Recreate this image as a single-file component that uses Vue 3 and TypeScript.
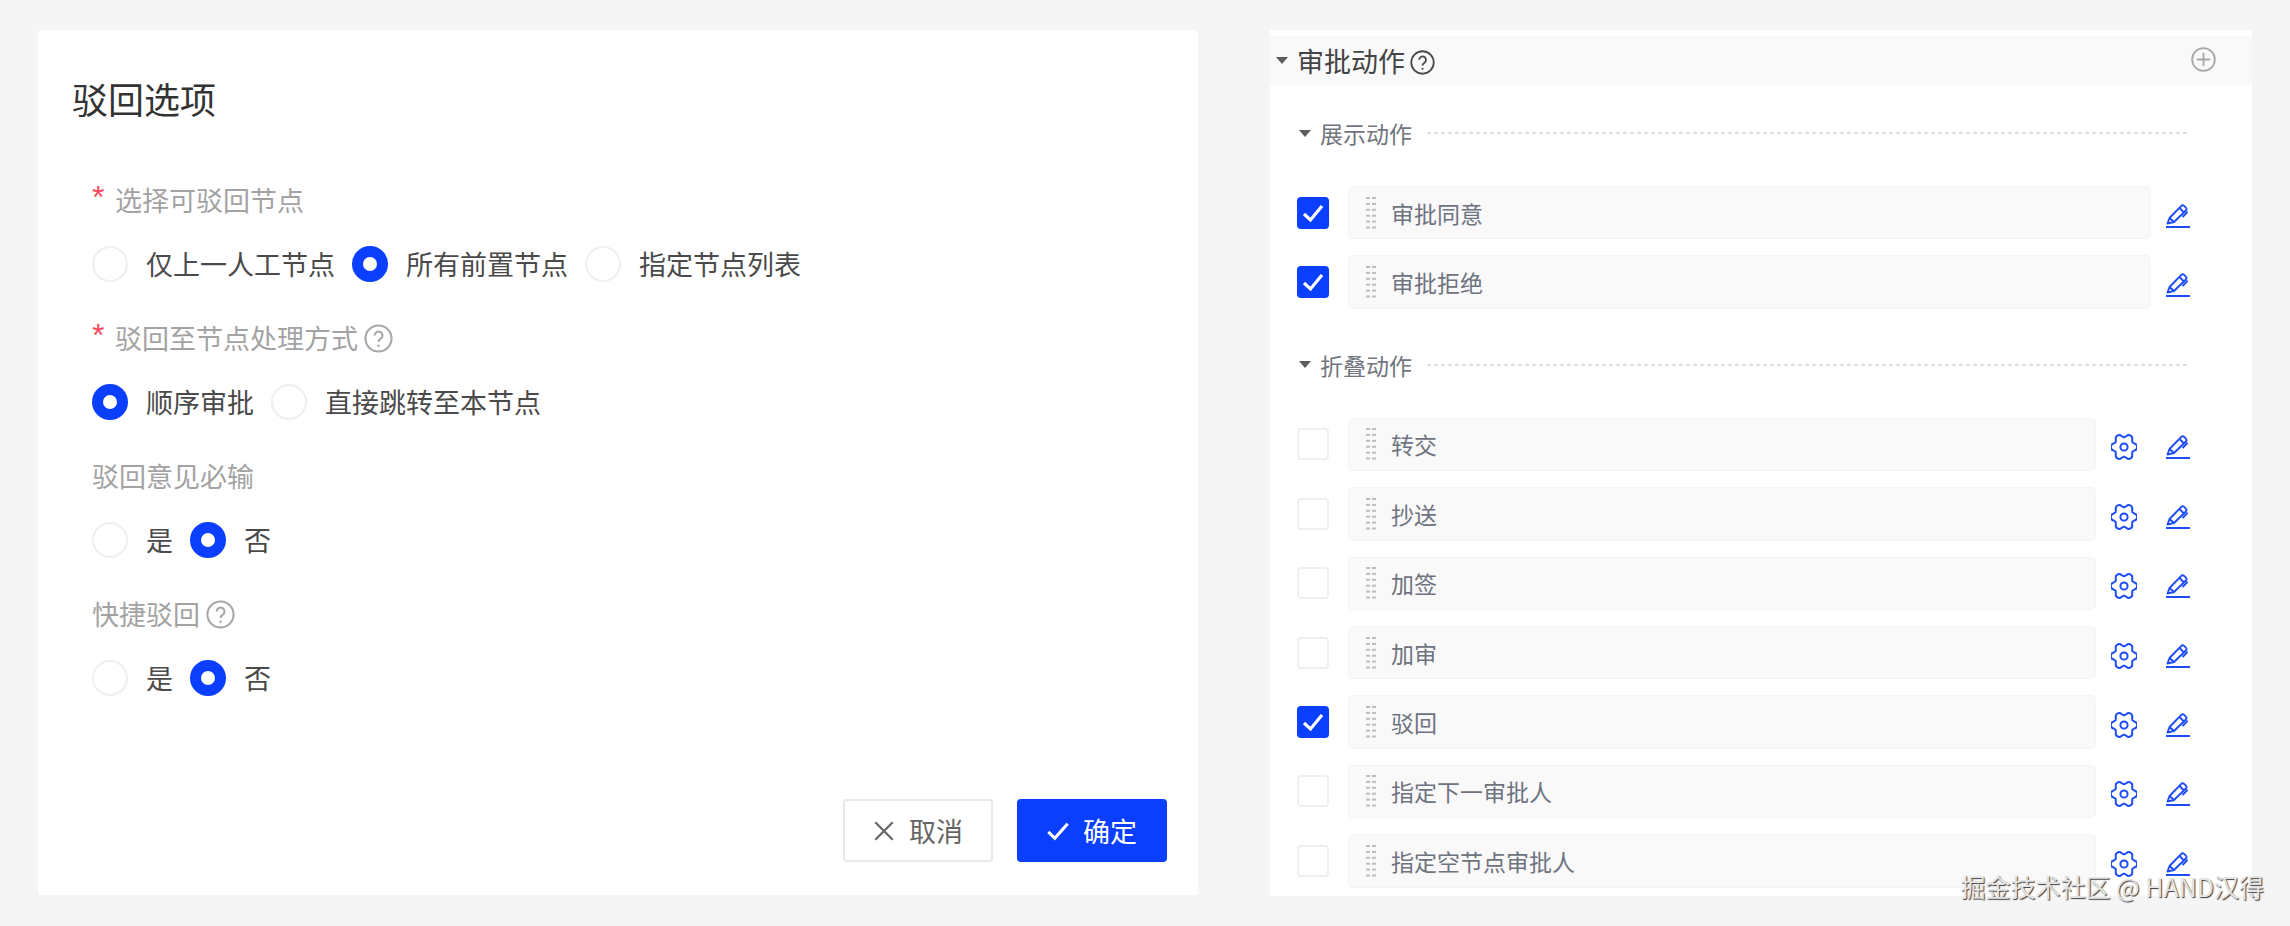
<script setup lang="ts">
interface RadioOpt { text: string; on: boolean }
interface FormGroup { label: string; required: boolean; help: boolean; options: RadioOpt[] }
interface ActionRow { name: string; checked: boolean }

const yesNo: RadioOpt[] = [
  { text: '是', on: false },
  { text: '否', on: true },
]
const groups: FormGroup[] = [
  {
    label: '选择可驳回节点', required: true, help: false,
    options: [
      { text: '仅上一人工节点', on: false },
      { text: '所有前置节点', on: true },
      { text: '指定节点列表', on: false },
    ],
  },
  {
    label: '驳回至节点处理方式', required: true, help: true,
    options: [
      { text: '顺序审批', on: true },
      { text: '直接跳转至本节点', on: false },
    ],
  },
  { label: '驳回意见必输', required: false, help: false, options: yesNo },
  { label: '快捷驳回', required: false, help: true, options: yesNo },
]
const shown: ActionRow[] = [
  { name: '审批同意', checked: true },
  { name: '审批拒绝', checked: true },
]
const folded: ActionRow[] = [
  { name: '转交', checked: false },
  { name: '抄送', checked: false },
  { name: '加签', checked: false },
  { name: '加审', checked: false },
  { name: '驳回', checked: true },
  { name: '指定下一审批人', checked: false },
  { name: '指定空节点审批人', checked: false },
]

const gearPath = (() => {
  const pt = (deg: number, r: number) => {
    const a = (deg * Math.PI) / 180
    return `${(13 + r * Math.cos(a)).toFixed(2)} ${(13 + r * Math.sin(a)).toFixed(2)}`
  }
  let d = ''
  for (let i = 0; i < 6; i++) {
    const c = i * 60
    d += `${i === 0 ? 'M' : 'L'}${pt(c - 17, 11.2)} A3.4 3.4 0 0 1 ${pt(c + 17, 11.2)} L${pt(c + 30, 9.6)} `
  }
  return d + 'Z'
})()
const handleRows = [0, 1, 2, 3, 4, 5]
</script>

<template>
  <div class="page">
    <section class="card">
      <h2 class="card-title">驳回选项</h2>
      <div class="form">
        <div v-for="g in groups" :key="g.label" class="group">
          <div class="label">
            <span v-if="g.required" class="star">*</span>
            <span>{{ g.label }}</span>
            <svg v-if="g.help" class="help" viewBox="0 0 28 28" fill="none" stroke="currentColor">
              <circle cx="14" cy="14" r="12.6" stroke-width="2" />
              <path d="M10.3 11a3.8 3.8 0 1 1 5.9 3.2c-1.4.9-2.2 1.6-2.2 3.2" stroke-width="2" />
              <circle cx="14" cy="21" r="1.2" fill="currentColor" stroke="none" />
            </svg>
          </div>
          <div class="radios">
            <div v-for="o in g.options" :key="o.text" class="radio-item">
              <span class="radio" :class="{ on: o.on }"></span>
              <span class="radio-text">{{ o.text }}</span>
            </div>
          </div>
        </div>
      </div>
      <div class="footer">
        <button class="btn ghost" type="button">
          <svg class="btn-ico" viewBox="0 0 24 24" fill="none" stroke="currentColor" stroke-width="2.4">
            <path d="M2.5 2.5l19 19M21.5 2.5l-19 19" />
          </svg>
          <span>取消</span>
        </button>
        <button class="btn primary" type="button">
          <svg class="btn-ico" viewBox="0 0 24 24" fill="none" stroke="currentColor" stroke-width="3.4">
            <path d="M1.5 13l7 7L22.5 4" />
          </svg>
          <span>确定</span>
        </button>
      </div>
    </section>

    <section class="panel">
      <header class="panel-head">
        <span class="caret"></span>
        <span class="panel-title">审批动作</span>
        <svg class="head-help" viewBox="0 0 28 28" fill="none" stroke="currentColor">
          <circle cx="14" cy="14" r="12.6" stroke-width="2" />
          <path d="M10.3 11a3.8 3.8 0 1 1 5.9 3.2c-1.4.9-2.2 1.6-2.2 3.2" stroke-width="2" />
          <circle cx="14" cy="21" r="1.2" fill="currentColor" stroke="none" />
        </svg>
        <svg class="plus" viewBox="0 0 26 26" fill="none" stroke="currentColor" stroke-width="1.9">
          <circle cx="13" cy="13" r="11.8" />
          <path d="M13 6v14M6 13h14" />
        </svg>
      </header>

      <div class="sub-head first">
        <span class="caret"></span>
        <span class="sub-title">展示动作</span>
        <span class="dots"></span>
      </div>
      <div class="rows">
        <div v-for="r in shown" :key="r.name" class="row">
          <span class="check" :class="{ on: r.checked }">
            <svg v-if="r.checked" viewBox="0 0 32 32" fill="none" stroke="#fff" stroke-width="3.2">
              <path d="M7 17l6.5 6L25 9" />
            </svg>
          </span>
          <div class="box">
            <svg class="handle" viewBox="0 0 10 32">
              <g v-for="h in handleRows" :key="h">
                <rect x="0" :y="h * 5.9" width="4" height="2" />
                <rect x="6" :y="h * 5.9" width="4" height="2" />
              </g>
            </svg>
            <span class="name">{{ r.name }}</span>
          </div>
          <div class="actions">
            <svg class="pen" viewBox="0 0 24 24" fill="none" stroke="currentColor" stroke-width="1.9" stroke-linejoin="round">
              <path d="M1.5 19.5l2-5.5L15.3 1.9a2 2 0 0 1 2.9 0l1.7 1.7a2 2 0 0 1 0 2.9L8 18z" />
              <path d="M3.5 14l4.500 4M13.500 4l4.500 4.500M20.500 7.500l.5 1-4.500 4.500" />
              <path d="M0 23h24" stroke-width="2" />
            </svg>
          </div>
        </div>
      </div>

      <div class="sub-head second">
        <span class="caret"></span>
        <span class="sub-title">折叠动作</span>
        <span class="dots"></span>
      </div>
      <div class="rows">
        <div v-for="r in folded" :key="r.name" class="row">
          <span class="check" :class="{ on: r.checked }">
            <svg v-if="r.checked" viewBox="0 0 32 32" fill="none" stroke="#fff" stroke-width="3.2">
              <path d="M7 17l6.5 6L25 9" />
            </svg>
          </span>
          <div class="box">
            <svg class="handle" viewBox="0 0 10 32">
              <g v-for="h in handleRows" :key="h">
                <rect x="0" :y="h * 5.9" width="4" height="2" />
                <rect x="6" :y="h * 5.9" width="4" height="2" />
              </g>
            </svg>
            <span class="name">{{ r.name }}</span>
          </div>
          <div class="actions">
            <svg class="gear" viewBox="0 0 26 26" fill="none" stroke="currentColor" stroke-width="2" stroke-linejoin="round">
              <path :d="gearPath" />
              <circle cx="13" cy="13" r="3.600" />
            </svg>
            <svg class="pen" viewBox="0 0 24 24" fill="none" stroke="currentColor" stroke-width="1.9" stroke-linejoin="round">
              <path d="M1.5 19.5l2-5.5L15.3 1.9a2 2 0 0 1 2.9 0l1.7 1.7a2 2 0 0 1 0 2.9L8 18z" />
              <path d="M3.5 14l4.500 4M13.500 4l4.500 4.500M20.500 7.500l.5 1-4.500 4.500" />
              <path d="M0 23h24" stroke-width="2" />
            </svg>
          </div>
        </div>
      </div>
    </section>

    <div class="watermark">掘金技术社区 @ HAND汉得</div>
  </div>
</template>

<style scoped>
.page {
  position: relative;
  display: flex;
  gap: 72px;
  box-sizing: border-box;
  width: 2290px;
  height: 926px;
  padding: 30px 38px;
  overflow: hidden;
  background: #f5f5f5;
  font-family: "Noto Sans CJK SC", "Noto Sans", sans-serif;
}
.card {
  display: flex;
  flex-direction: column;
  box-sizing: border-box;
  width: 1160px;
  height: 865px;
  padding: 46px 31px 33px 34px;
  background: #fff;
  border-radius: 4px;
}
.card-title {
  margin: 0;
  font-size: 36px;
  font-weight: 400;
  line-height: 44px;
  color: #333;
}
.form {
  display: flex;
  flex-direction: column;
  gap: 38px;
  margin: 62px 0 0 20px;
}
.label {
  display: flex;
  align-items: center;
  height: 36px;
  font-size: 27px;
  line-height: 36px;
  color: #a3a3a3;
}
.star {
  width: 23px;
  height: 36px;
  font-family: "Liberation Sans", sans-serif;
  font-size: 32px;
  line-height: 30px;
  color: #f5475b;
}
.help {
  width: 29px;
  height: 29px;
  margin-left: 6px;
  color: #a8a8a8;
}
.radios {
  display: flex;
  margin-top: 28px;
}
.radio-item {
  display: flex;
  align-items: center;
  margin-right: 17px;
}
.radio {
  box-sizing: border-box;
  width: 36px;
  height: 36px;
  margin-right: 18px;
  border: 2px solid #efefef;
  border-radius: 50%;
  background: #fff;
}
.radio.on {
  border: 11px solid #0a3fff;
}
.radio-text {
  font-size: 27px;
  line-height: 36px;
  color: #4a4a4a;
}
.footer {
  display: flex;
  justify-content: flex-end;
  gap: 24px;
  margin-top: auto;
}
.btn {
  display: flex;
  align-items: center;
  justify-content: center;
  gap: 14px;
  box-sizing: border-box;
  width: 150px;
  height: 63px;
  padding: 0;
  border-radius: 4px;
  font-family: inherit;
  font-size: 27px;
  line-height: 30px;
}
.btn-ico {
  width: 22px;
  height: 22px;
}
.ghost {
  border: 2px solid #e8e8e8;
  background: #fff;
  color: #666;
}
.primary {
  border: none;
  background: #0a3fff;
  color: #fff;
}

.panel {
  box-sizing: border-box;
  width: 982px;
  height: 866px;
  padding-top: 6px;
  background: #fff;
}
.panel-head {
  display: flex;
  align-items: center;
  height: 49px;
  padding: 0 36px 0 6px;
  background: #f9f9f9;
  color: #444;
}
.caret {
  flex: none;
  width: 0;
  height: 0;
  border-style: solid;
  border-width: 7px 6px 0;
  border-color: #5c5c5c transparent transparent;
}
.panel-title {
  margin-left: 9px;
  font-size: 27px;
  line-height: 36px;
}
.head-help {
  width: 25px;
  height: 25px;
  margin: 4px 0 0 5px;
  color: #484848;
}
.plus {
  width: 25px;
  height: 25px;
  margin: -2px 0 0 auto;
  color: #a9a9a9;
}
.sub-head {
  display: flex;
  align-items: center;
  height: 30px;
  padding: 0 62px 0 29px;
}
.sub-head.first {
  margin-top: 33px;
}
.sub-head.second {
  margin-top: 41px;
}
.sub-title {
  margin-left: 9px;
  font-size: 23px;
  line-height: 30px;
  color: #71757e;
}
.dots {
  flex: 1;
  height: 2px;
  margin-left: 15px;
  background: repeating-linear-gradient(90deg, #dedede 0 4px, transparent 4px 7px);
}
.rows {
  display: flex;
  flex-direction: column;
  gap: 16px;
  margin-top: 38px;
  padding: 0 62px 0 27px;
}
.row {
  display: flex;
  align-items: center;
  height: 53.4px;
}
.check {
  flex: none;
  box-sizing: border-box;
  width: 32px;
  height: 32px;
  margin-right: 19px;
  border: 2px solid #efefef;
  border-radius: 4px;
  background: #fff;
}
.check.on {
  border: none;
  background: #0a3fff;
}
.check svg {
  display: block;
  width: 32px;
  height: 32px;
}
.box {
  flex: 1;
  display: flex;
  align-items: center;
  gap: 15px;
  box-sizing: border-box;
  height: 100%;
  padding-left: 17px;
  border: 1px solid #f4f4f4;
  border-radius: 5px;
  background: #f9f9f9;
}
.handle {
  width: 10px;
  height: 32px;
  fill: #bdbdbd;
}
.name {
  font-size: 23px;
  line-height: 30px;
  color: #6e7380;
}
.actions {
  display: flex;
  align-items: center;
  gap: 29px;
  margin: 6px 0 0 15px;
  color: #1f4df5;
}
.gear {
  width: 26px;
  height: 26px;
}
.pen {
  width: 24px;
  height: 24px;
}
.watermark {
  position: absolute;
  right: 26px;
  top: 869px;
  font-size: 25px;
  line-height: 34px;
  color: #e4e4e4;
  text-shadow: 1px 1px 1px #3c3c3c;
  white-space: nowrap;
}
</style>
